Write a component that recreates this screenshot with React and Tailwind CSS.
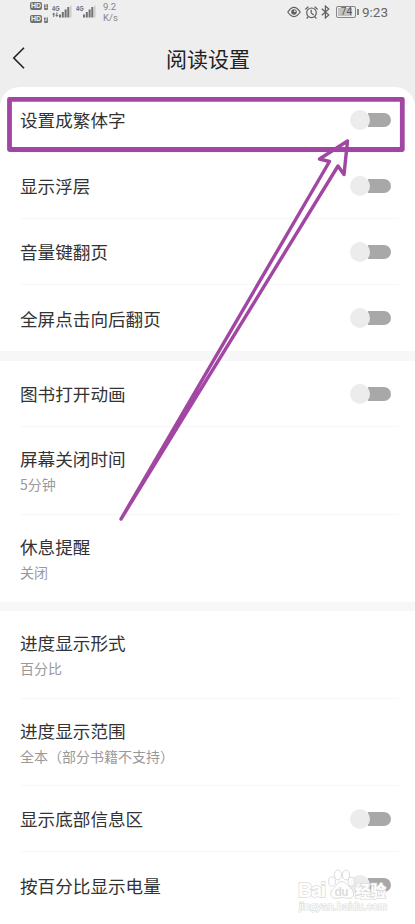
import React from "react";

const sections = [
  {
    id: "display",
    border: "",
    items: [
      { title: "设置成繁体字", toggle: true },
      { title: "显示浮层", toggle: true },
      { title: "音量键翻页", toggle: true },
      { title: "全屏点击向后翻页", toggle: true },
    ],
  },
  {
    id: "screen",
    border: "border-t-[10px]",
    items: [
      { title: "图书打开动画", toggle: true },
      { title: "屏幕关闭时间", value: "5分钟" },
      { title: "休息提醒", value: "关闭" },
    ],
  },
  {
    id: "progress",
    border: "border-t-[9px]",
    items: [
      { title: "进度显示形式", value: "百分比" },
      { title: "进度显示范围", value: "全本（部分书籍不支持）" },
      { title: "显示底部信息区", toggle: true },
      { title: "按百分比显示电量", toggle: true },
    ],
  },
];

const HdBadge = ({ sim }) => (
  <div className="flex items-end gap-[2px]">
    <span className="flex h-[8px] w-[12px] items-center justify-center rounded-[2px] bg-[#707070] font-['Liberation_Sans',sans-serif] text-[7px] leading-none font-bold text-[#eee]">
      HD
    </span>
    <span className="flex h-[6px] w-[4px] items-center justify-center rounded-[1px] bg-[#777] font-['Liberation_Sans',sans-serif] text-[5px] leading-none font-bold text-[#eee]">
      {sim}
    </span>
  </div>
);

const Signal = ({ data }) => (
  <svg width="20" height="13" viewBox="0 0 20 13">
    <text x="0" y="5.5" fill="#666" fontSize="6.5" fontWeight="bold" fontFamily="Liberation Sans, sans-serif" textLength="7.5" lengthAdjust="spacingAndGlyphs">
      4G
    </text>
    <g fill="#707070">
      {data && <path d="M0 9.5 1.7 7.5 3.4 9.5H2.3V12H1.2V9.5ZM3.2 10H4.3V7.5H5.4V10H6.5L4.8 12Z" />}
      <rect x="7" y="9.5" width="2" height="3" />
      <rect x="9.8" y="7" width="2" height="5.5" />
      <rect x="12.6" y="4.5" width="2" height="8" />
      <rect x="15.3" y="2" width="2" height="10.5" />
    </g>
    <rect x="18" y="0.5" width="1.6" height="12" fill="#cfcfcf" />
  </svg>
);

const StatusBar = () => (
  <div className="flex h-6 justify-between pr-[27px] pl-[30px] text-[#666]">
    <div className="flex items-start">
      <div className="flex flex-col gap-[5px] pt-[1.5px]">
        <HdBadge sim="1" />
        <HdBadge sim="2" />
      </div>
      <div className="mt-[5px] ml-[4px] flex gap-[4px]">
        <Signal data />
        <Signal />
      </div>
      <div className="mt-[2px] ml-[7px] font-[Roboto,sans-serif] text-[9.5px] leading-[10.5px] text-[#858585]">
        <p>9.2</p>
        <p>K/s</p>
      </div>
    </div>

    <div className="flex h-6 items-center">
      <svg className="mr-px" width="14" height="12" viewBox="0 0 14 12" fill="none" stroke="#606060" strokeWidth="1.2">
        <path d="M.8 6Q7-3.2 13.2 6 7 15.2.8 6Z" />
        <circle cx="7" cy="6" r="2.8" fill="#606060" stroke="none" />
        <circle cx="7.8" cy="5.2" r=".9" fill="#eee" stroke="none" />
      </svg>
      <svg className="ml-[3px]" width="13" height="13" viewBox="0 0 13 13" fill="none" stroke="#606060" strokeWidth="1.2" strokeLinecap="round">
        <circle cx="6.5" cy="6.8" r="4.8" />
        <path d="M6.2 4v3l2.2 1.7M.8 3 3 1M12.2 3 10 1M3 11l-1 1.2M10 11l1 1.2" />
      </svg>
      <svg className="ml-[3px]" width="9" height="14" viewBox="0 0 9 14" fill="none" stroke="#606060" strokeWidth="1.2">
        <path d="m.8 3.8 7 6.2-3.4 3V1l3.4 3-7 6.2" />
      </svg>
      <div className="ml-[6px] flex h-[12px] w-[20px] items-center rounded-[2px] border border-[#858585] p-px">
        <span className="flex h-full w-[14px] items-center justify-center bg-[#c2c2c2] pl-[3px] font-[Roboto,sans-serif] text-[10px] leading-none text-[#555]">
          74
        </span>
      </div>
      <span className="ml-px h-[6px] w-[2px] bg-[#858585]" />
      <span className="mt-px ml-[3px] font-[Roboto,sans-serif] text-[13.5px] leading-none">9:23</span>
    </div>
  </div>
);

const Toggle = () => (
  <div className="flex h-5 w-[41px] shrink-0 items-center">
    <span className="relative z-10 size-5 shrink-0 rounded-full bg-[#ececec]" />
    <span className="-ml-[2px] h-[14px] w-[23px] rounded-r-full bg-[#a8a8a8]" />
  </div>
);

const SettingRow = ({ item, last }) => (
  <div
    className={`mr-4 ml-5 flex items-center justify-between pr-2 ${
      item.value ? "h-[87.5px]" : "h-[66px]"
    } ${last ? "" : "border-b border-[#f7f7f7]"}`}
  >
    <div className="mt-px">
      <p className="text-[17.6px] leading-[26px] text-[#333]">{item.title}</p>
      {item.value && (
        <p className="mt-px text-[14px] leading-[22px] text-[#999]">{item.value}</p>
      )}
    </div>
    {item.toggle && <Toggle />}
  </div>
);

const Watermark = () => (
  <svg
    className="absolute top-[866px] left-[296px] z-20"
    width="95"
    height="50"
    viewBox="0 0 95 50"
    fill="#fff"
    fillOpacity="0.6"
    stroke="#dcdcdc"
    strokeWidth="1"
  >
    <ellipse cx="36" cy="15.5" rx="3.4" ry="4.6" />
    <ellipse cx="42" cy="9" rx="3.6" ry="4.9" />
    <ellipse cx="50" cy="9" rx="3.6" ry="4.9" />
    <ellipse cx="55.5" cy="15.8" rx="3.4" ry="4.6" />
    <path d="M45.5 15.5c-4 0-5 4.5-8 7-3.500 3-4 8 .5 9.500 3 1 5-.5 8-.5s6 1.500 9 .5c4-1.500 3-7 0-9.500s-5.500-7-9.500-7Z" />
    <g fontFamily='"Liberation Sans", "Noto Sans CJK SC", sans-serif' fontWeight="bold" paintOrder="stroke" fillOpacity="1">
      <text x="2" y="31" fontSize="20" textLength="28" strokeWidth="1.5">Bai</text>
      <text x="38.5" y="29.5" fontSize="12" textLength="14" fill="#ddd" stroke="none">du</text>
      <text x="59" y="30.5" fontSize="15.5" textLength="31" strokeWidth="1.5">经验</text>
      <text x="3" y="43.5" fontSize="10.5" fontWeight="normal" textLength="88" strokeWidth="1.2">
        jingyan.baidu.com
      </text>
    </g>
  </svg>
);

const App = () => {
  return (
    <div className="relative h-[924px] w-full overflow-hidden bg-[#eee] font-['Noto_Sans_CJK_SC',sans-serif]">
      <StatusBar />

      <header className="grid h-[63px] grid-cols-3 items-center">
        <svg className="mt-[4px] ml-3" width="14" height="22" viewBox="0 0 14 22" fill="none" stroke="#222" strokeWidth="1.6">
          <path d="M12 .8 1.8 11 12 21.2" />
        </svg>
        <h1 className="mt-[4px] ml-px text-center text-[21px] leading-[30px] whitespace-nowrap text-[#222]">阅读设置</h1>
      </header>

      <main className="h-[837px] overflow-hidden rounded-t-[20px] bg-white">
        {sections.map((section) => (
          <section key={section.id} className={`border-[#f7f7f7] ${section.border}`}>
            {section.items.map((item, i) => (
              <SettingRow
                key={item.title}
                item={item}
                last={i === section.items.length - 1}
              />
            ))}
          </section>
        ))}
      </main>

      {/* highlight box and arrow over the first setting */}
      <svg
        className="absolute inset-0 z-20"
        width="415"
        height="924"
        viewBox="0 0 415 924"
        fill="none"
        stroke="#a146a3"
        strokeLinejoin="round"
      >
        <rect x="9.5" y="99.3" width="392.8" height="50.2" strokeWidth="4.8" />
        <path
          d="M121 519 329.5 161.5 319.5 159 347.5 141 344 174.5 338 166Z"
          strokeWidth="3.4"
        />
      </svg>

      <Watermark />
    </div>
  );
};

export default App;
